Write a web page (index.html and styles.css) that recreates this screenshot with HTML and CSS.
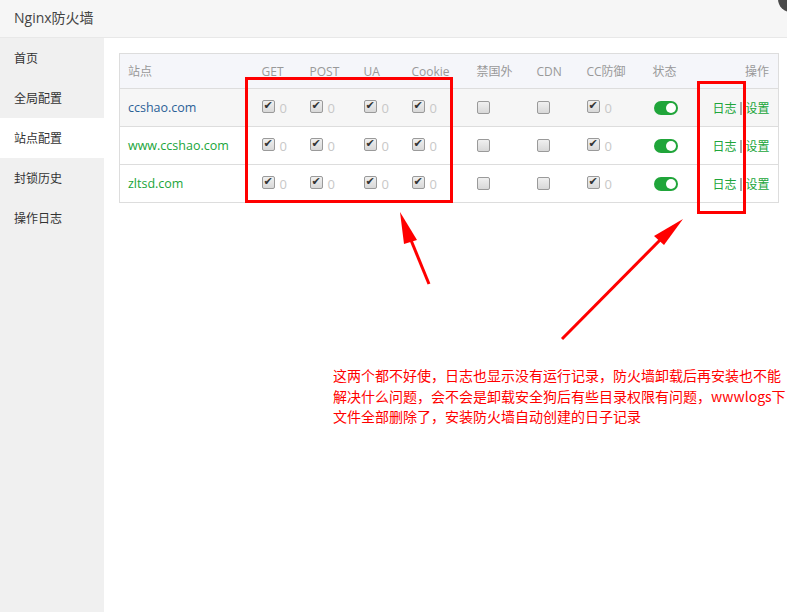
FILE: index.html
```html
<!DOCTYPE html>
<html lang="zh-CN">
<head>
    <meta charset="UTF-8">
    <title>Nginx防火墙</title>
    <link rel="stylesheet" href="styles.css">
</head>
<body>

    <!-- Window title -->
    <header class="title-bar">
        <h1>Nginx防火墙</h1>
        <span class="close-btn"></span>
    </header>

    <div class="layout">
        <!-- Side menu -->
        <ul class="side-menu">
            <li>首页</li>
            <li>全局配置</li>
            <li class="active">站点配置</li>
            <li>封锁历史</li>
            <li>操作日志</li>
        </ul>

        <!-- Site list -->
        <div class="content">
            <table class="site-table">
                <colgroup>
                    <col style="width: 134px">
                    <col style="width: 48px">
                    <col style="width: 54px">
                    <col style="width: 48px">
                    <col style="width: 65px">
                    <col style="width: 60px">
                    <col style="width: 50px">
                    <col style="width: 66px">
                    <col style="width: 60px">
                    <col>
                </colgroup>
                <thead>
                    <tr>
                        <th>站点</th>
                        <th>GET</th>
                        <th>POST</th>
                        <th>UA</th>
                        <th>Cookie</th>
                        <th>禁国外</th>
                        <th>CDN</th>
                        <th>CC防御</th>
                        <th>状态</th>
                        <th class="right">操作</th>
                    </tr>
                </thead>
                <tbody>
                    <tr class="hover">
                        <td class="site blue">ccshao.com</td>
                        <td><input type="checkbox" class="chk" checked><span class="count">0</span></td>
                        <td><input type="checkbox" class="chk" checked><span class="count">0</span></td>
                        <td><input type="checkbox" class="chk" checked><span class="count">0</span></td>
                        <td><input type="checkbox" class="chk" checked><span class="count">0</span></td>
                        <td><input type="checkbox" class="chk"></td>
                        <td><input type="checkbox" class="chk"></td>
                        <td><input type="checkbox" class="chk" checked><span class="count">0</span></td>
                        <td><span class="switch"></span></td>
                        <td class="right"><a class="op">日志</a><span class="sep"></span><a class="op">设置</a></td>
                    </tr>
                    <tr>
                        <td class="site">www.ccshao.com</td>
                        <td><input type="checkbox" class="chk" checked><span class="count">0</span></td>
                        <td><input type="checkbox" class="chk" checked><span class="count">0</span></td>
                        <td><input type="checkbox" class="chk" checked><span class="count">0</span></td>
                        <td><input type="checkbox" class="chk" checked><span class="count">0</span></td>
                        <td><input type="checkbox" class="chk"></td>
                        <td><input type="checkbox" class="chk"></td>
                        <td><input type="checkbox" class="chk" checked><span class="count">0</span></td>
                        <td><span class="switch"></span></td>
                        <td class="right"><a class="op">日志</a><span class="sep"></span><a class="op">设置</a></td>
                    </tr>
                    <tr>
                        <td class="site">zltsd.com</td>
                        <td><input type="checkbox" class="chk" checked><span class="count">0</span></td>
                        <td><input type="checkbox" class="chk" checked><span class="count">0</span></td>
                        <td><input type="checkbox" class="chk" checked><span class="count">0</span></td>
                        <td><input type="checkbox" class="chk" checked><span class="count">0</span></td>
                        <td><input type="checkbox" class="chk"></td>
                        <td><input type="checkbox" class="chk"></td>
                        <td><input type="checkbox" class="chk" checked><span class="count">0</span></td>
                        <td><span class="switch"></span></td>
                        <td class="right"><a class="op">日志</a><span class="sep"></span><a class="op">设置</a></td>
                    </tr>
                </tbody>
            </table>
        </div>
    </div>

    <!-- Red annotations drawn over the screenshot -->
    <svg class="marks" width="787" height="612" viewBox="0 0 787 612">
        <g fill="none" stroke="#ff0000" stroke-width="3">
            <rect x="246.5" y="78.5" width="205" height="123"/>
            <rect x="698.5" y="82.5" width="46" height="130"/>
            <line x1="429" y1="284" x2="406" y2="228"/>
            <line x1="562" y1="339" x2="668" y2="232"/>
        </g>
        <g fill="#ff0000">
            <polygon points="400,212 417,240 404,244"/>
            <polygon points="683,219 664,245 654,236"/>
        </g>
    </svg>
    <p class="note">这两个都不好使，日志也显示没有运行记录，防火墙卸载后再安装也不能<br>解决什么问题，会不会是卸载安全狗后有些目录权限有问题，wwwlogs下<br>文件全部删除了，安装防火墙自动创建的日子记录</p>

</body>
</html>
```

FILE: styles.css
```css
/* Reset */
* { margin: 0; padding: 0; box-sizing: border-box; }

body {
    font-family: "Open Sans", "Noto Sans CJK SC", sans-serif;
    font-size: 12px;
    color: #333;
    background: #fff;
    width: 787px;
    height: 612px;
    overflow: hidden;
    position: relative;
}

/* Title bar */
.title-bar {
    height: 38px;
    background: #f6f6f6;
    border-bottom: 1px solid #e8e8e8;
    padding-left: 14px;
    display: flex;
    align-items: center;
    position: relative;
}

.title-bar h1 {
    font-size: 14px;
    font-weight: normal;
    color: #444;
    margin-top: -4px;
}

.close-btn {
    position: absolute;
    top: -14px;
    right: -17px;
    width: 26px;
    height: 26px;
    border-radius: 50%;
    background: #4b4b4b;
}

/* Layout */
.layout {
    display: flex;
    height: 574px;
}

.side-menu {
    list-style: none;
    width: 104px;
    background: #f0f0f0;
    flex-shrink: 0;
}

.side-menu li {
    height: 40px;
    line-height: 40px;
    padding: 1px 0 0 14px;
    color: #333;
}

.side-menu li.active {
    background: #fff;
}

.content {
    flex: 1;
    padding: 15px 8px 0 15px;
}

/* Site table */
.site-table {
    width: 660px;
    table-layout: fixed;
    border-collapse: collapse;
    border: 1px solid #ddd;
}

.site-table th {
    height: 35px;
    background: #f5f6fa;
    color: #999;
    font-weight: normal;
    text-align: left;
    padding-left: 8px;
    border-bottom: 1px solid #ddd;
}

.site-table td {
    height: 38px;
    padding-left: 8px;
    border-bottom: 1px solid #ddd;
    vertical-align: middle;
    white-space: nowrap;
}

.site-table tr.hover td {
    background: #f6f6f6;
}

.site-table .right {
    text-align: right;
    padding-right: 9px;
}

.site-table td.site {
    color: #20a53a;
    font-size: 12.5px;
}

.site-table td.site.blue {
    color: #2b6196;
}

/* Checkboxes */
.chk {
    appearance: none;
    -webkit-appearance: none;
    width: 13px;
    height: 13px;
    border: 1px solid #9a9a9a;
    border-radius: 2px;
    background: linear-gradient(#f0f0f0, #d8d8d8);
    vertical-align: middle;
    position: relative;
    margin-top: -3px;
}

.chk:checked::after {
    content: "\2714";
    position: absolute;
    left: 1px;
    top: -2px;
    font-size: 11px;
    color: #333;
    font-family: "DejaVu Sans", sans-serif;
}

.count {
    color: #c8c8c8;
    margin-left: 5px;
    font-size: 13px;
    vertical-align: middle;
}

/* Status switch */
.switch {
    display: inline-block;
    width: 24px;
    height: 14px;
    border-radius: 7px;
    background: #20a53a;
    position: relative;
    vertical-align: middle;
    margin: -2px 0 0 1px;
}

.switch::after {
    content: "";
    position: absolute;
    right: 2px;
    top: 2px;
    width: 10px;
    height: 10px;
    border-radius: 50%;
    background: #fff;
}

/* Row actions */
.op {
    color: #20a53a;
}

.sep {
    display: inline-block;
    width: 2px;
    height: 13px;
    background: #aaa;
    vertical-align: middle;
    margin: -2px 4px 0 3px;
}

/* Annotations */
.marks {
    position: absolute;
    left: 0;
    top: 0;
}

.note {
    position: absolute;
    left: 333px;
    top: 365px;
    width: 460px;
    font-family: "Noto Sans CJK SC", sans-serif;
    font-size: 14px;
    line-height: 20.5px;
    color: #ff0000;
    white-space: nowrap;
}
```
